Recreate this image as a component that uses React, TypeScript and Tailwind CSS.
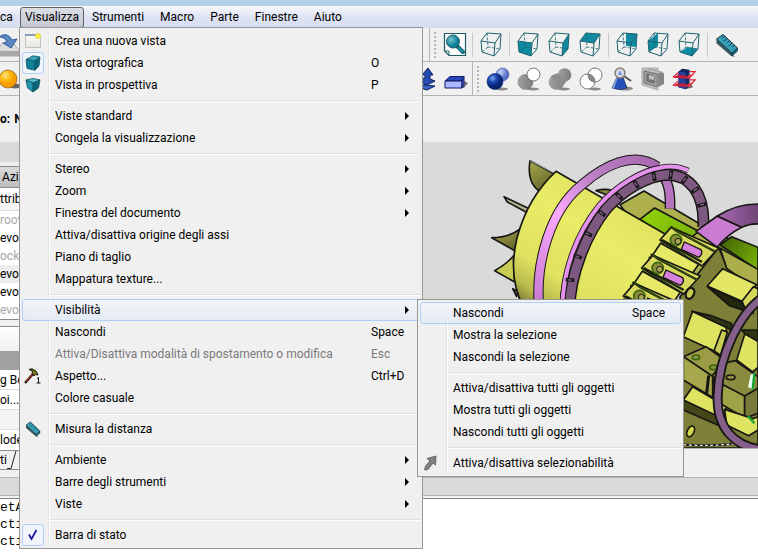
import React from "react";

type Face = "front" | "right" | "top" | "rear" | "left" | "bottom";

const FACES: Record<Face, string> = {
  front: "1,9 15,11 14,24 2,20",
  right: "15,11 21,2 20,17 14,24",
  top: "1,9 15,11 21,2 7,1",
  rear: "10,1 21,2 20,15 10,14",
  left: "1,9 11,1 11,14 2,20",
  bottom: "2,20 14,24 20,17 10,15",
};

function CubeIcon({ face }: { face?: Face }) {
  return (
    <svg width="23" height="25" viewBox="0 0 23 25" fill="none" stroke="#1f626d">
      {face && <polygon points={FACES[face]} fill="#0f8aa3" stroke="none" />}
      <path d="M1 9 L15 11 L14 24 L2 20 Z M1 9 L7 1 L21 2 L15 11 M21 2 L20 17 L14 24" strokeLinejoin="round" />
      <path d="M7 1 L8 15 L20 17 M8 15 L2 20" strokeDasharray="3 1.5" strokeWidth=".8" />
    </svg>
  );
}

function FitIcon() {
  return (
    <svg width="24" height="26" viewBox="0 0 24 26">
      <defs>
        <radialGradient id="lens" cx=".35" cy=".35">
          <stop offset="0" stopColor="#79c2d0" />
          <stop offset="1" stopColor="#0b7f96" />
        </radialGradient>
      </defs>
      <path d="M1.5 1.5h21v22H6l-4.500-4.500z" fill="#fff" stroke="#1d5c66" strokeWidth="1.200" />
      <path d="M1.500 19h4.500v4.500" fill="none" stroke="#1d5c66" />
      <path d="M14 14 L20 20" stroke="#1d5c66" strokeWidth="4" strokeLinecap="round" />
      <path d="M16 16 L19.500 19.500" stroke="#1b9bb4" strokeWidth="2" strokeLinecap="round" />
      <circle cx="10" cy="9.500" r="6.500" fill="url(#lens)" stroke="#1d5c66" />
    </svg>
  );
}

function RulerIcon({ size = 24 }: { size?: number }) {
  return (
    <svg width={size} height={size} viewBox="0 0 24 24">
      <path d="M1 10 L16 23 L20 24 L4 8 Z" fill="#666" />
      <path d="M1.500 6 L8 1.500 L22.500 15 L17 20 Z" fill="#35a0b8" stroke="#17343b" />
      <path d="M1.500 6 L17 20 L17 23 L1.500 9.500 Z" fill="#2b5660" />
      <path d="M22.500 15v3l-5.500 5V20z" fill="#0f6a7d" stroke="#17343b" strokeWidth=".7" />
      <path d="M9.500 3.200l-2 2M12 5.300l-3 3M14.500 7.600l-2 2M17 9.900l-3 3M19.500 12.200l-2 2" stroke="#082b33" />
    </svg>
  );
}

function WireframeArrows() {
  return (
    <svg width="24" height="24" viewBox="0 0 24 24">
      <path d="M15 1 L20 8 H17 V12 L22 14 L14 18 L5 15 V12 L12 11 V8 H9Z" fill="#234bb0" stroke="#0b1d5c" />
      <path d="M4 20 L12 18 L22 19 L14 23 Z" fill="#3a66c9" stroke="#0b1d5c" />
    </svg>
  );
}

function BoxIcon() {
  return (
    <svg width="24" height="24" viewBox="0 0 24 24">
      <path d="M4 21 L20 21 L24 16 L20 14Z" fill="#777" />
      <path d="M1 14 L6 9.500 H20 L18 14Z" fill="#2446b8" stroke="#101d66" />
      <path d="M1 14 H18 V21 H1Z" fill="#a9b8ff" stroke="#101d66" />
      <path d="M18 14 L20 9.500 V17 L18 21Z" fill="#5668c9" stroke="#101d66" />
    </svg>
  );
}

type BoolKind = "boolean" | "cut" | "union" | "intersect";

function SpheresIcon({ kind }: { kind: BoolKind }) {
  return (
    <svg width="24" height="24" viewBox="0 0 24 24">
      <defs>
        <radialGradient id="blueBall" cx=".35" cy=".3">
          <stop offset="0" stopColor="#7fa6f0" />
          <stop offset=".5" stopColor="#1c49b4" />
          <stop offset="1" stopColor="#08236f" />
        </radialGradient>
        <radialGradient id="paleBall" cx=".35" cy=".3">
          <stop offset="0" stopColor="#cbd7ff" />
          <stop offset="1" stopColor="#5670c8" />
        </radialGradient>
        <linearGradient id="greyBall">
          <stop offset="0" stopColor="#a2a2a2" />
          <stop offset="1" stopColor="#7a7a7a" />
        </linearGradient>
      </defs>
      <ellipse cx="16" cy="22" rx="6" ry="1.500" fill="#8a8a8a" />
      {kind === "boolean" && (
        <>
          <circle cx="16.500" cy="7.500" r="6.500" fill="url(#paleBall)" stroke="#3f55a8" strokeWidth=".6" />
          <circle cx="9" cy="14.500" r="8" fill="url(#blueBall)" stroke="#0a2268" strokeWidth=".6" />
        </>
      )}
      {kind === "cut" && (
        <>
          <circle cx="8.500" cy="15" r="7.500" fill="url(#greyBall)" stroke="#777" strokeWidth=".6" />
          <circle cx="16.500" cy="7.500" r="6.500" fill="#fff" stroke="#777" />
        </>
      )}
      {kind === "union" && (
        <>
          <circle cx="8.500" cy="15" r="7.800" fill="url(#greyBall)" />
          <circle cx="16.500" cy="8" r="6.800" fill="url(#greyBall)" />
          <path d="M3 9 L10 6 L18 15 L14 20Z" fill="#8d8d8d" />
        </>
      )}
      {kind === "intersect" && (
        <>
          <circle cx="8.500" cy="14.500" r="7.500" fill="#fff" />
          <circle cx="16" cy="8" r="7" fill="#fff" />
          <path d="M9.200 7 Q16 8.500 15.800 15 Q8.500 14 9.200 7Z" fill="#8b8b8b" />
          <circle cx="8.500" cy="14.500" r="7.500" fill="none" stroke="#777" />
          <circle cx="16" cy="8" r="7" fill="none" stroke="#777" />
        </>
      )}
    </svg>
  );
}

function CheckGeometryIcon() {
  return (
    <svg width="24" height="24" viewBox="0 0 24 24">
      <ellipse cx="15" cy="21.500" rx="8" ry="2" fill="#8a8a8a" />
      <path d="M7 10 H13 L17 21 Q10 24 2 21Z" fill="#2450ba" stroke="#1a2c50" strokeWidth=".7" />
      <path d="M7 10 L2 21 L4 22 L8 10Z" fill="#809fd8" />
      <path d="M14 9 L21 14" stroke="#555" strokeWidth="2" />
      <circle cx="10" cy="6" r="5" fill="#d8dce8" stroke="#8a8170" strokeWidth="1.500" />
      <path d="M8 8 L10 3 L12 8Z" fill="#718ddb" />
    </svg>
  );
}

function ThicknessIcon() {
  return (
    <svg width="24" height="24" viewBox="0 0 24 24">
      <path d="M1 1 H17 V23 L1 18Z" fill="#c4c4c4" stroke="#aaa" />
      <path d="M12 3 L23 6 V17 L17 20 V6Z" fill="#858585" />
      <path d="M3 4 L9 2 L21 5 L16 7Z" fill="#bdbdbd" stroke="#888" strokeWidth=".6" />
      <path d="M3 4 L16 7 V20 L3 16Z" fill="#9d9d9d" stroke="#777" />
      <path d="M6 7 L13 9 V16 L6 14Z" fill="#777" stroke="#666" />
      <path d="M8 8 L13 9 V13 L8 12Z" fill="#c0c0c0" />
    </svg>
  );
}

function SectionsIcon() {
  return (
    <svg width="24" height="24" viewBox="0 0 26 24">
      <path d="M15 23 L23 21 L20 17Z" fill="#777" />
      <path d="M7 4 L11 1 L19 2 V20 L15 23 L7 21Z" fill="#12265f" />
      <path d="M7 4 L15 5 V23 L7 21Z" fill="#22409b" />
      <path d="M1 10 L7 5 M1 10 L19 11 L25 4 H19 M1 19 L7 14 M1 19 L19 20 L25 13 H19" fill="none" stroke="#e0202b" strokeWidth="1.200" />
      <path d="M2 10 L7 7 V10Z M2 19 L7 16 V19Z M7 8 H15 V11 L7 10Z M7 17 H15 V20 L7 19Z" fill="#c71c3c" />
      <path d="M15 10 L19 7 H22 L19 11Z M15 19 L19 16 H22 L19 20Z" fill="#e23b46" />
    </svg>
  );
}

function NewViewIcon() {
  return (
    <svg width="16" height="16" viewBox="0 0 16 16">
      <defs>
        <linearGradient id="sheet" x2="0" y2="1">
          <stop offset="0" stopColor="#fff" />
          <stop offset="1" stopColor="#e4e4e0" />
        </linearGradient>
      </defs>
      <path d="M.5 1.500h15v13H.5z" fill="url(#sheet)" stroke="#c2c2be" />
      <path d="M0 1h13v2H0z" fill="#8b9dbd" />
      <circle cx="13" cy="3" r="2.500" fill="#fff04a" stroke="#e8d94a" />
    </svg>
  );
}

function OrthoIcon() {
  return (
    <svg width="16" height="16" viewBox="0 0 16 16" stroke="#0c5361" strokeWidth=".8" strokeLinejoin="round">
      <path d="M1 4.500 L8 .8 L15 2 L10 6Z" fill="#35a5bb" />
      <path d="M1 4.500 L10 6 V15.200 L2 13.500Z" fill="#0f8299" />
      <path d="M10 6 L15 2 L14 11 L10 15.200Z" fill="#08677b" />
    </svg>
  );
}

function PerspectiveIcon() {
  return (
    <svg width="16" height="16" viewBox="0 0 16 16" stroke="#0c5361" strokeWidth=".8" strokeLinejoin="round">
      <path d="M1 3 L8 1.500 L15 3 L8 6Z" fill="#54b9cb" />
      <path d="M1 3 L8 6 V15 L2.500 11Z" fill="#2495ac" />
      <path d="M15 3 L8 6 V15 L13.500 11Z" fill="#08677b" />
    </svg>
  );
}

function HammerIcon() {
  return (
    <svg width="18" height="16" viewBox="0 0 18 16">
      <path d="M1 15 L9 6" stroke="#111" strokeWidth="2.400" />
      <path d="M1.500 14 L9 6" stroke="#9b2f23" strokeWidth="1.200" />
      <path d="M5 1.500 L8 .8 L12 3 L14 7 L11.500 6.500 L10 8 L8 5 L8.500 3Z" fill="#7e7a10" stroke="#111" />
      <path d="M13 10.500 L14.500 9.500 V15 M12.500 15 H16.500" fill="none" stroke="#111" />
    </svg>
  );
}

function SelectableIcon() {
  return (
    <svg width="16" height="16" viewBox="0 0 16 16">
      <path d="M4 3.500 L13 1 L12.500 10 L10 8 L5 14.500 L1.500 15 L2.500 11 L7 6Z" fill="#808080" stroke="#555" strokeWidth=".8" />
    </svg>
  );
}

function CheckIcon() {
  return (
    <svg width="12" height="12" viewBox="0 0 12 12" fill="none" stroke="#1616a0" strokeWidth="1.700">
      <path d="M2 5.500 L4.500 10 L9.500 1" />
    </svg>
  );
}

function ImportIcon() {
  return (
    <svg width="24" height="26" viewBox="0 0 24 26">
      <path d="M2 18 L6 11 H17 L23 18 V24 H2Z" fill="#dcdcdc" stroke="#b0b0b0" />
      <path d="M2 19h21v5H2z" fill="#a9a9a9" />
      <path d="M3 5 Q11 -1 16 8 L21 7 L15 16 L7 11 L11 10 Q9 5 3 5Z" fill="#5d87c2" stroke="#315d9d" />
    </svg>
  );
}

function SphereIcon() {
  return (
    <svg width="24" height="24" viewBox="0 0 24 24">
      <defs>
        <radialGradient id="orange" cx=".35" cy=".3">
          <stop offset="0" stopColor="#ffe58a" />
          <stop offset=".5" stopColor="#ffbf1a" />
          <stop offset="1" stopColor="#f59b00" />
        </radialGradient>
      </defs>
      <ellipse cx="17" cy="19" rx="6" ry="2.500" fill="#666" />
      <circle cx="10" cy="12" r="9" fill="url(#orange)" stroke="#8a5a08" strokeWidth=".7" />
    </svg>
  );
}

interface Entry {
  label: string;
  shortcut?: string;
  arrow?: boolean;
  disabled?: boolean;
  active?: boolean;
  framed?: boolean;
  icon?: React.ReactNode;
  children?: Entry[][];
}

const SUBMENU: Entry[][] = [
  [
    { label: "Nascondi", shortcut: "Space", active: true },
    { label: "Mostra la selezione" },
    { label: "Nascondi la selezione" },
  ],
  [
    { label: "Attiva/disattiva tutti gli oggetti" },
    { label: "Mostra tutti gli oggetti" },
    { label: "Nascondi tutti gli oggetti" },
  ],
  [{ label: "Attiva/disattiva selezionabilità", icon: <SelectableIcon /> }],
];

const MENU: Entry[][] = [
  [
    { label: "Crea una nuova vista", icon: <NewViewIcon /> },
    { label: "Vista ortografica", shortcut: "O", icon: <OrthoIcon />, framed: true },
    { label: "Vista in prospettiva", shortcut: "P", icon: <PerspectiveIcon /> },
  ],
  [
    { label: "Viste standard", arrow: true },
    { label: "Congela la visualizzazione", arrow: true },
  ],
  [
    { label: "Stereo", arrow: true },
    { label: "Zoom", arrow: true },
    { label: "Finestra del documento", arrow: true },
    { label: "Attiva/disattiva origine degli assi" },
    { label: "Piano di taglio" },
    { label: "Mappatura texture..." },
  ],
  [
    { label: "Visibilità", arrow: true, active: true, children: SUBMENU },
    { label: "Nascondi", shortcut: "Space" },
    { label: "Attiva/Disattiva modalità di spostamento o modifica", shortcut: "Esc", disabled: true },
    { label: "Aspetto...", shortcut: "Ctrl+D", icon: <HammerIcon /> },
    { label: "Colore casuale" },
  ],
  [{ label: "Misura la distanza", icon: <RulerIcon size={16} /> }],
  [
    { label: "Ambiente", arrow: true },
    { label: "Barre degli strumenti", arrow: true },
    { label: "Viste", arrow: true },
  ],
  [{ label: "Barra di stato", icon: <CheckIcon />, framed: true }],
];

function MenuItem({ entry }: { entry: Entry }) {
  const frame = entry.active
    ? "border-[#aecff7] bg-linear-to-b from-[#f2f5f9]/80 to-[#e2eaf6]/80"
    : "border-transparent";
  return (
    <li role="none" className="relative">
      <button
        role="menuitem"
        disabled={entry.disabled}
        className={`flex h-[22px] w-full items-center rounded-[3px] border text-left whitespace-nowrap ${frame} ${entry.disabled ? "text-[#7a7a7a]" : "text-black"}`}
      >
        <span
          className={`-ml-px flex h-[22px] w-[22px] shrink-0 items-center justify-center rounded-[3px] border ${entry.framed ? "border-[#aecff7] bg-[#f1f5fb]" : "border-transparent"}`}
        >
          {entry.icon}
        </span>
        <span className="ml-[11px] flex-1">{entry.label}</span>
        {entry.shortcut && <span className="w-12 shrink-0">{entry.shortcut}</span>}
        {entry.arrow && (
          <svg className="mr-[10px] shrink-0" width="4" height="8" viewBox="0 0 4 8">
            <path d="M0 0 L4 4 L0 8Z" />
          </svg>
        )}
      </button>
      {entry.children && <Menu groups={entry.children} place="top-0 left-[395px] z-20 w-[267px]" />}
    </li>
  );
}

function Menu({ groups, place }: { groups: Entry[][]; place: string }) {
  return (
    <div className={`absolute border border-[#979797] bg-[#f0f0f0] p-0.5 ${place}`}>
      <div className="absolute inset-y-0.5 left-[28px] w-0.5 border-l border-[#e2e3e3] bg-white" />
      {groups.map((group, i) => (
        <React.Fragment key={i}>
          {i > 0 && (
            <div className="flex h-[9px] items-center pl-[28px]">
              <hr className="h-0.5 w-full border-0 border-t border-[#e0e0e0] bg-white" />
            </div>
          )}
          <ul role="menu" className="relative">
            {group.map((entry) => (
              <MenuItem key={entry.label} entry={entry} />
            ))}
          </ul>
        </React.Fragment>
      ))}
    </div>
  );
}

function Handle() {
  return <div className="h-[26px] w-0.5 border-l-2 border-dotted border-[#b4b4b4]" />;
}

function Tool({ label, children }: { label: string; children: React.ReactNode }) {
  return (
    <button aria-label={label} className="flex h-8 w-[31px] shrink-0 items-center justify-center">
      {children}
    </button>
  );
}

function Divider() {
  return <div className="ml-0.5 mr-[3px] h-6 w-px shrink-0 bg-[#c9c9c9]" />;
}

/* Slots repeated along the rim of the inner ring: x, y, rotation. */
const RIM_NOTCHES = [
  [450, 450, 5], [473, 380, 22], [504, 312, 28], [545, 250, 35], [597, 199, 45],
  [648, 163, 60], [702, 140, 80], [752, 135, 100], [793, 149, 125], [825, 180, 145], [845, 224, 165],
];

function Model() {
  return (
    <svg className="block h-[306px] w-full" viewBox="9 36 1005 918" preserveAspectRatio="xMinYMin slice" role="img" aria-label="Modello 3D">
      <defs>
        <linearGradient id="drum" x1=".7" y1=".1" x2="0" y2="1">
          <stop offset="0" stopColor="#dfe160" />
          <stop offset=".35" stopColor="#e9ec66" />
          <stop offset=".7" stopColor="#e0e260" />
          <stop offset=".85" stopColor="#b9bb4d" />
          <stop offset="1" stopColor="#5c5d22" />
        </linearGradient>
        <linearGradient id="ring" x1="0" y1="1" x2="1" y2="0">
          <stop offset="0" stopColor="#c77bd0" />
          <stop offset=".4" stopColor="#fba9ff" />
          <stop offset=".7" stopColor="#b87cc0" />
          <stop offset="1" stopColor="#a868b0" />
        </linearGradient>
        <linearGradient id="green" x2="1" y2=".6">
          <stop offset="0" stopColor="#93d60a" />
          <stop offset="1" stopColor="#7ab008" />
        </linearGradient>
        <linearGradient id="darkGreen" x2="1" y2=".6">
          <stop offset="0" stopColor="#3f5d05" />
          <stop offset="1" stopColor="#72aa08" />
        </linearGradient>
        <linearGradient id="violet">
          <stop offset="0" stopColor="#a868b2" />
          <stop offset="1" stopColor="#6c4374" />
        </linearGradient>
        <linearGradient id="fin" x2=".6" y2="1">
          <stop offset="0" stopColor="#a8a84e" />
          <stop offset="1" stopColor="#66662c" />
        </linearGradient>
      </defs>
      <g stroke="#171713" strokeWidth="5" strokeLinejoin="round">
        <path d="M330 92 L408 134 L356 182 Q320 155 330 92Z" fill="url(#fin)" />
        <path d="M330 92 L404 130" stroke="#ddd" strokeWidth="2" />
        <path d="M252 200 L328 236 L318 246 L262 216Z" fill="#adad90" />
        <path d="M215 323 Q268 322 298 298 L284 362Z" fill="url(#fin)" />
        <path d="M224 422 Q260 402 280 378 L284 456Z" fill="#c9cc55" />
        <path d="M278 476 L294 484 L290 500Z" fill="#555" />
        <path d="M528 182 Q555 174 578 182 L570 198Z" fill="#8c8c40" />
        <path d="M600 224 L672 183 L850 288 L1014 370 V954 H820 V520 L700 360Z" fill="#aeb04d" />
        <path d="M660 268 L704 234 L836 304 L780 350Z" fill="url(#green)" />
        <path d="M900 345 L935 320 L1014 352 V420Z" fill="url(#darkGreen)" />
        <path d="M408 124 L740 315 L650 530 H310 Q262 440 292 320 Q325 200 408 124Z" fill="url(#drum)" />
        <path d="M548 208 Q425 360 420 530" fill="none" strokeWidth="3" />
        <path d="M582 228 Q480 340 458 530" fill="none" />
      </g>
      <g fill="none" strokeLinecap="butt">
        <path d="M750 236 C752 180 745 130 690 108" stroke="#171713" strokeWidth="32" />
        <path d="M750 236 C752 180 745 130 690 108" stroke="#b574bd" strokeWidth="24" />
        <path d="M357 530 C346 400 390 240 485 165 C550 108 640 60 712 110" stroke="#171713" strokeWidth="31" />
        <path d="M357 530 C346 400 390 240 485 165 C550 108 640 60 712 110" stroke="url(#ring)" strokeWidth="25" />
        <path d="M448 540 C450 430 500 310 560 235 C610 180 680 138 740 134 C810 134 855 190 850 292" stroke="#171713" strokeWidth="36" />
        <path d="M448 540 C450 430 500 310 560 235 C610 180 680 138 740 134 C810 134 855 190 850 292" stroke="#7e597f" strokeWidth="27" />
        <path d="M427 540 C427 420 470 310 538 225 C590 165 665 122 720 113 C750 107 780 110 805 122" stroke="#171713" strokeWidth="17" />
        <path d="M427 540 C427 420 470 310 538 225 C590 165 665 122 720 113 C750 107 780 110 805 122" stroke="#e592ee" strokeWidth="12" />
      </g>
      {RIM_NOTCHES.map(([x, y, a]) => (
        <g key={x} transform={`translate(${x} ${y}) rotate(${a})`}>
          <rect x="-13" y="-6" width="26" height="11" fill="#1a171b" />
          <rect x="-7" y="-2" width="12" height="4" fill="#85698a" />
        </g>
      ))}
      <g stroke="#171713" strokeWidth="5" strokeLinejoin="round">
        <path d="M828 304 L892 258 L965 292 Q920 315 892 352Z" fill="#c97cd1" />
        <path d="M892 258 Q950 220 1020 222 V282 Q990 280 965 292Z" fill="url(#violet)" />
        <path d="M896 352 L780 500 V954 H1014 V430 L922 415Z" fill="#7f8038" />
        <path d="M900 354 L1014 418 V480 L920 415Z" fill="#acae4b" />
        {[0, 1, 2].map((n) => (
          <g key={n} transform={`translate(${n * -55} ${n * 84})`}>
            <path d="M753 292 L896 354 L846 408 L720 330Z" fill="#d7da5d" />
            <path d="M752 290 L768 302 L886 365 M726 330 L846 396 M720 340 L836 404" fill="none" stroke="#1c220e" strokeWidth="7" />
            <path d="M752 290 L768 302 L886 365 M720 335 L836 399" fill="none" stroke="#4c7a14" strokeWidth="2" />
            <circle cx="768" cy="330" r="17" fill="#898b3c" stroke="#3b660b" />
            <circle cx="774" cy="334" r="9" fill="#a6a853" strokeWidth="3" />
            <path d="M793 336 L843 359 Q850 372 836 382 L784 358Z" fill="#d781df" strokeWidth="4" />
            <path d="M722 340 L836 403 L806 446 L696 378Z" fill="#e6e966" />
            <path d="M692 373 L812 434 M686 382 L806 446" fill="none" stroke="#1c220e" strokeWidth="7" />
            <path d="M690 378 L808 440" fill="none" stroke="#4c7a14" strokeWidth="2" />
          </g>
        ))}
        <ellipse cx="810" cy="490" rx="12" ry="17" fill="#c9cc50" transform="rotate(25 810 490)" strokeWidth="7" />
        <path d="M908 416 L1010 464 L966 514 L862 468Z" fill="#e2e664" />
        <path d="M862 470 L962 515 L1000 550 L930 528Z" fill="#22260d" />
        <path d="M966 514 L1000 470 L1014 476 V520 L978 540Z" fill="#d5d95b" />
        <path d="M818 544 L920 592 L902 672 L790 620Z" fill="#dfe362" />
        <path d="M816 544 L940 602 L934 580 L870 556Z" fill="#2e3314" />
        <path d="M905 600 L922 606 L902 676 L882 662Z" fill="#c8cc54" />
        <path d="M790 680 L858 650 L914 690 L876 738Z" fill="#9b9c45" />
        <path d="M790 680 L882 742 V805 L790 750Z" fill="#a6a84b" />
        <path d="M790 810 L818 770 L920 830 L900 872Z" fill="#dfe362" />
        <path d="M790 810 L900 862 V888 L790 840Z" fill="#454719" />
        <path d="M950 690 L975 610 L1014 634 V712 L998 726Z" fill="#dfe362" />
        <path d="M965 600 L1014 600 V634 L975 612Z" fill="#2e3314" />
        <path d="M910 700 L945 692 L1014 740 V780 L974 800 L900 760Z" fill="#8a8b3e" />
        <path d="M900 760 L974 798 V865 L900 820Z" fill="#a0a247" />
        <path d="M974 798 L1014 775 V850 L974 865Z" fill="#78793a" />
        <path d="M914 838 L1000 866 L1014 860 V900 L986 917 L920 885Z" fill="#dfe362" />
        <path d="M866 736 L860 790 M880 742 V800" fill="none" strokeWidth="9" />
        <ellipse cx="828" cy="682" rx="11" ry="7" fill="#909246" stroke="#3b660b" />
        <ellipse cx="880" cy="712" rx="11" ry="7" fill="#909246" stroke="#3b660b" />
        <ellipse cx="932" cy="742" rx="13" ry="7" fill="#909246" />
        <ellipse cx="812" cy="904" rx="10" ry="17" fill="#d5d850" transform="rotate(25 812 904)" />
      </g>
      <path d="M992 734 L1002 730 L996 776 L984 772Z" fill="#e6fff0" />
      <path d="M1003 730 L998 778 M984 858 L1003 880" fill="none" stroke="#18a532" strokeWidth="7" />
      <path d="M790 944 Q880 950 950 940" fill="none" stroke="#171713" strokeWidth="7" />
      <path d="M790 944 Q880 950 950 940" fill="none" stroke="#ddd" strokeWidth="4" strokeDasharray="9 7" />
      <path d="M1040 495 C960 540 895 680 893 800 C890 890 940 950 1030 960" fill="none" stroke="#171713" strokeWidth="30" />
      <path d="M1040 495 C960 540 895 680 893 800 C890 890 940 950 1030 960" fill="none" stroke="#85608a" strokeWidth="19" />
    </svg>
  );
}

const TREE = [
  { text: "roov", muted: true },
  { text: "evol" },
  { text: "ocke", muted: true },
  { text: "evol", selected: true },
  { text: "evol" },
  { text: "evol", muted: true },
];

function SidePanel() {
  return (
    <aside className="w-[423px] shrink-0 overflow-hidden">
      <div className="h-5 bg-[#dadada]" />
      <div className="mt-1 flex h-[21px] items-center border-t border-[#8b8b8b] bg-linear-to-b from-[#dcdcdc] to-[#bdbdbd] pl-0.5">Azio</div>
      <div className="border-y border-[#8b8b8b] bg-white">
        <div className="flex h-[23px] items-center border-b border-[#ddd] bg-linear-to-b from-white to-[#f3f3f3]">ttrib</div>
        <ul>
          {TREE.map((row, i) => (
            <li
              key={i}
              className={`flex h-[18px] items-center ${row.muted ? "text-[#a8a8a8]" : ""} ${row.selected ? "bg-[#ececec]" : ""}`}
            >
              {row.text}
            </li>
          ))}
        </ul>
      </div>
      <div className="mt-[6px] border-y border-[#8b8b8b] bg-white">
        <div className="h-6 bg-linear-to-b from-white to-[#f0f0f0]" />
        <div className="h-[19px] bg-[#a0a0a0]" />
        <div className="flex h-5 items-center border-b border-[#ddd]">g Bo</div>
        <div className="flex h-5 items-center border-b border-[#ddd]">oi...</div>
        <div className="h-5 border-b border-[#ddd] bg-[#f4f4f4]" />
        <div className="flex h-5 items-center">lode</div>
      </div>
      <div className="flex h-[19px] w-[30px] items-center border-b border-[#8b8b8b] bg-[#f0f0f0]">
        <span>ti</span>
        <svg width="14" height="18" viewBox="0 0 14 18" fill="none" stroke="#222">
          <path d="M0 17.500 H4 L9 0" />
        </svg>
      </div>
    </aside>
  );
}

const MENU_TITLES = ["Strumenti", "Macro", "Parte", "Finestre", "Aiuto"];

export default function App() {
  return (
    <div className="relative flex min-h-screen flex-col overflow-hidden bg-[#f0f0f0] font-[Roboto,'Noto_Sans',sans-serif] text-[12px] leading-4 text-black">
      <div className="h-1.5 bg-[#b6cfe9]" />
      <nav className="flex h-[22px] items-center bg-linear-to-b from-[#f8f9fd] via-[#dfe4f4] via-50% to-[#d5dcef]">
        <button className="w-5 text-left">ca</button>
        <button className="h-[21px] w-16 rounded-[3px] border border-[#5f6068] bg-linear-to-b from-[#dcdee4] to-[#c4c8d4] text-center">Visualizza</button>
        {MENU_TITLES.map((title) => (
          <button key={title} className="px-2">{title}</button>
        ))}
      </nav>

      <div className="flex h-[34px] items-center border-b border-[#b5b5b5]">
        <div className="flex h-full w-[430px] shrink-0 items-center border-r border-[#b5b5b5]">
          <button aria-label="Importa" className="-ml-1"><ImportIcon /></button>
        </div>
        <div className="flex items-center pl-1">
          <Handle />
          <div className="ml-[3px] flex items-center">
            <Tool label="Adatta tutto"><FitIcon /></Tool>
            <Divider />
            <Tool label="Assonometrica"><CubeIcon /></Tool>
            <Divider />
            <Tool label="Fronte"><CubeIcon face="front" /></Tool>
            <Tool label="Destra"><CubeIcon face="right" /></Tool>
            <Tool label="Alto"><CubeIcon face="top" /></Tool>
            <Divider />
            <Tool label="Retro"><CubeIcon face="rear" /></Tool>
            <Tool label="Sinistra"><CubeIcon face="left" /></Tool>
            <Tool label="Basso"><CubeIcon face="bottom" /></Tool>
            <Divider />
            <Tool label="Misura"><RulerIcon /></Tool>
          </div>
        </div>
      </div>

      <div className="flex h-[34px] items-center border-b border-[#b5b5b5]">
        <div className="flex h-full w-[473px] shrink-0 items-center justify-between border-r border-[#b5b5b5]">
          <button aria-label="Sfera" className="-ml-0.5"><SphereIcon /></button>
          <div className="flex items-center pr-px">
            <Tool label="Loft"><WireframeArrows /></Tool>
            <Tool label="Spessore"><BoxIcon /></Tool>
          </div>
        </div>
        <div className="flex items-center pl-1">
          <Handle />
          <div className="ml-[3px] flex items-center">
            <Tool label="Booleana"><SpheresIcon kind="boolean" /></Tool>
            <Tool label="Taglia"><SpheresIcon kind="cut" /></Tool>
            <Tool label="Unisci"><SpheresIcon kind="union" /></Tool>
            <Tool label="Interseca"><SpheresIcon kind="intersect" /></Tool>
            <Tool label="Verifica geometria"><CheckGeometryIcon /></Tool>
            <Tool label="Offset"><ThicknessIcon /></Tool>
            <Tool label="Sezioni"><SectionsIcon /></Tool>
          </div>
        </div>
      </div>

      <div className="flex h-[46px] items-center gap-1 font-bold">
        <span>o:</span>
        <span>N</span>
      </div>

      <main className="flex h-[335px]">
        <SidePanel />
        <section className="min-w-0 flex-1 overflow-hidden">
          <div className="border-b border-[#b5b5b5] bg-[#dadada]">
            <Model />
          </div>
        </section>
      </main>

      <div className="mb-0.5 h-[19px] border-y border-[#b5b5b5] bg-[#dadada]" />
      <pre className="flex-1 border-t border-[#828790] bg-white font-['Liberation_Mono',monospace] text-[13px] leading-[17px]">
        {"etA\ncti\ncti"}
      </pre>

      <Menu groups={MENU} place="top-[27px] left-[19px] z-10 w-[404px]" />
    </div>
  );
}
